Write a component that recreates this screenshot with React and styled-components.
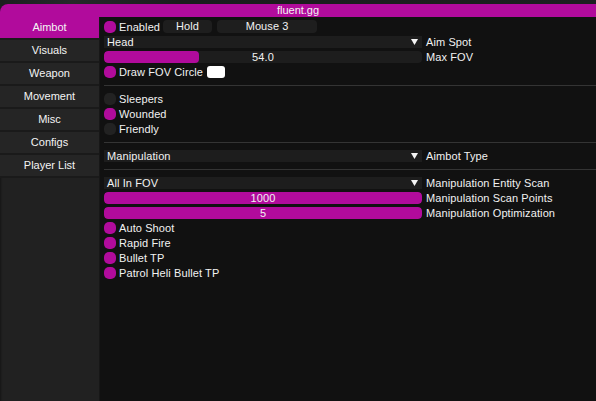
import React from "react";
import styled, { createGlobalStyle } from "styled-components";

const ACCENT = "#b10b9c";

const Global = createGlobalStyle`
  html, body {
    margin: 0;
    padding: 0;
    background: #1a1e1e;
    overflow: hidden;
  }
  body {
    font-family: "Liberation Sans", Arial, sans-serif;
    font-size: 11px;
    color: #f2f2f2;
  }
`;

const Backdrop = styled.div`
  width: 596px;
  height: 401px;
  padding-top: 4px;
  box-sizing: border-box;
  background: linear-gradient(90deg, #1b1f1f 0%, #252929 12%, #1a1d1d 30%, #1c2020 100%);
`;

const Window = styled.div`
  height: 397px;
  display: flex;
  flex-direction: column;
  border-top-left-radius: 8px;
  overflow: hidden;
  background: #111111;
`;

const TitleBar = styled.div`
  height: 13px;
  line-height: 13px;
  background: ${ACCENT};
  text-align: center;
  color: #f4f4f4;
  flex: none;
`;

const Body = styled.div`
  flex: 1;
  display: flex;
  min-height: 0;
`;

const Sidebar = styled.nav`
  width: 99px;
  flex: none;
  background: #212121;
  border-right: 1px solid #171717;
  display: flex;
  flex-direction: column;
  box-shadow: inset 2px 0 2px -1px #161616;
`;

const Tab = styled.div`
  height: 21px;
  line-height: 21px;
  text-align: center;
  background: ${(p) => (p.$active ? ACCENT : "#252525")};
  border-bottom: 2px solid #1a1a1a;
  color: #f4f4f4;
`;

const Content = styled.main`
  flex: 1;
  padding: 3px 0 0 4px;
  display: flex;
  flex-direction: column;
  gap: 3px;
  background: #111111;
`;

const Row = styled.div`
  display: flex;
  align-items: center;
  height: ${(p) => p.$h || 12}px;
  line-height: 12px;
  white-space: nowrap;
  letter-spacing: 0.1px;
`;

const Box = styled.span`
  width: 12px;
  height: 12px;
  border-radius: 5px;
  flex: none;
  background: ${(p) => (p.$on ? ACCENT : "#222222")};
`;

const Label = styled.span`
  margin-left: ${(p) => p.$ml ?? 3}px;
`;

const KeyButton = styled.span`
  width: ${(p) => p.$w}px;
  height: 13px;
  line-height: 13px;
  margin-left: ${(p) => p.$ml}px;
  border-radius: 4px;
  background: #1e1e1e;
  text-align: center;
  flex: none;
`;

const Combo = styled.div`
  width: 318px;
  height: 12px;
  flex: none;
  box-sizing: border-box;
  padding: 0 3px;
  background: #1d1d1d;
  display: flex;
  align-items: center;
  justify-content: space-between;
`;

const Arrow = styled.svg`
  width: 7px;
  height: 6px;
  margin-right: 1px;
`;

const Track = styled.div`
  position: relative;
  width: 318px;
  height: 12px;
  flex: none;
  border-radius: 4px;
  background: #1d1d1d;
  overflow: hidden;
`;

const Fill = styled.div`
  height: 100%;
  background: ${ACCENT};
  border-radius: 4px;
`;

const Value = styled.span`
  position: absolute;
  inset: 0;
  text-align: center;
  line-height: 12px;
`;

const Swatch = styled.span`
  width: 18px;
  height: 12px;
  margin-left: 4px;
  border-radius: 3px;
  background: #ffffff;
  flex: none;
`;

const Divider = styled.div`
  height: 1px;
  margin: 4px 0;
  background: #343434;
  flex: none;
`;

const tabs = ["Aimbot", "Visuals", "Weapon", "Movement", "Misc", "Configs", "Player List"];

function Check({ on, children }) {
  return (
    <Row>
      <Box $on={on} />
      <Label>{children}</Label>
    </Row>
  );
}

function Select({ value, label }) {
  return (
    <Row>
      <Combo>
        <span>{value}</span>
        <Arrow viewBox="0 0 7 6">
          <path d="M0 0 H7 L3.5 6 Z" fill="#f4f4f4" />
        </Arrow>
      </Combo>
      <Label $ml={4}>{label}</Label>
    </Row>
  );
}

function Slider({ value, ratio, label }) {
  return (
    <Row>
      <Track>
        <Fill style={{ width: `${ratio * 100}%` }} />
        <Value>{value}</Value>
      </Track>
      <Label $ml={4}>{label}</Label>
    </Row>
  );
}

export default function App() {
  return (
    <>
      <Global />
      <Backdrop>
        <Window>
          <TitleBar>fluent.gg</TitleBar>
          <Body>
            <Sidebar>
              {tabs.map((t, i) => (
                <Tab key={t} $active={i === 0}>
                  {t}
                </Tab>
              ))}
            </Sidebar>
            <Content>
              <Row $h={13}>
                <Box $on />
                <Label>Enabled</Label>
                <KeyButton $w={49} $ml={3}>Hold</KeyButton>
                <KeyButton $w={100} $ml={5}>Mouse 3</KeyButton>
              </Row>
              <Select value="Head" label="Aim Spot" />
              <Slider value="54.0" ratio={0.3} label="Max FOV" />
              <Row>
                <Box $on />
                <Label>Draw FOV Circle</Label>
                <Swatch />
              </Row>
              <Divider />
              <Check>Sleepers</Check>
              <Check on>Wounded</Check>
              <Check>Friendly</Check>
              <Divider />
              <Select value="Manipulation" label="Aimbot Type" />
              <Divider />
              <Select value="All In FOV" label="Manipulation Entity Scan" />
              <Slider value="1000" ratio={1} label="Manipulation Scan Points" />
              <Slider value="5" ratio={1} label="Manipulation Optimization" />
              <Check on>Auto Shoot</Check>
              <Check on>Rapid Fire</Check>
              <Check on>Bullet TP</Check>
              <Check on>Patrol Heli Bullet TP</Check>
            </Content>
          </Body>
        </Window>
      </Backdrop>
    </>
  );
}
